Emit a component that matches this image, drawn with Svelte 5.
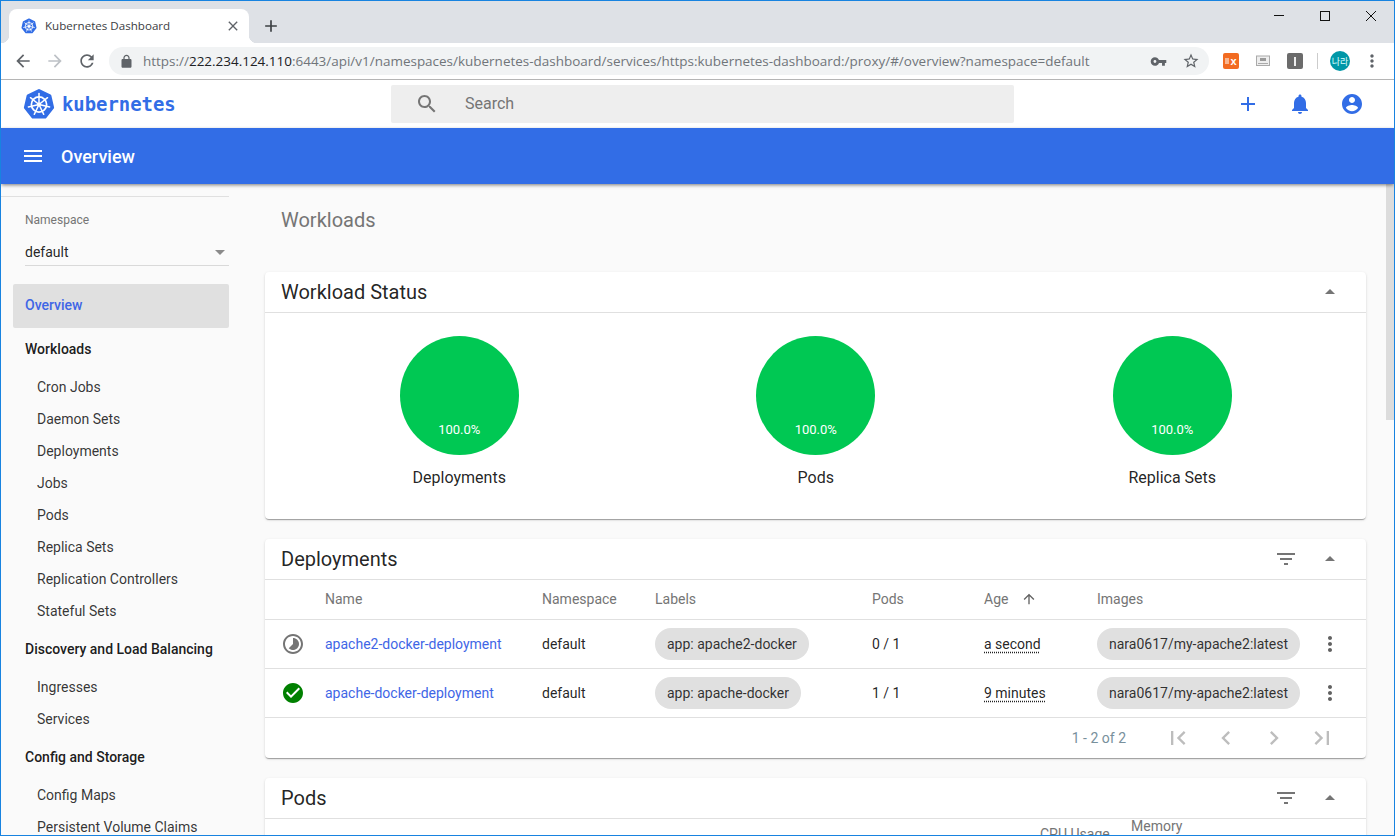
<script>
  const P = {
    back: "M20 11H7.83l5.59-5.59L12 4l-8 8 8 8 1.41-1.41L7.83 13H20v-2z",
    fwd: "M12 4l-1.41 1.41L16.17 11H4v2h12.17l-5.58 5.59L12 20l8-8z",
    reload: "M17.65 6.35C16.2 4.9 14.21 4 12 4c-4.42 0-7.99 3.58-7.99 8s3.57 8 7.99 8c3.73 0 6.84-2.55 7.73-6h-2.08c-.82 2.33-3.04 4-5.65 4-3.31 0-6-2.69-6-6s2.69-6 6-6c1.66 0 3.14.69 4.22 1.78L13 11h7V4l-2.35 2.35z",
    lock: "M18 8h-1V6c0-2.76-2.24-5-5-5S7 3.24 7 6v2H6c-1.1 0-2 .9-2 2v10c0 1.1.9 2 2 2h12c1.1 0 2-.9 2-2V10c0-1.1-.9-2-2-2zM9 6c0-1.66 1.34-3 3-3s3 1.34 3 3v2H9V6z",
    key: "M12.65 10C11.83 7.67 9.61 6 7 6c-3.31 0-6 2.69-6 6s2.69 6 6 6c2.61 0 4.83-1.67 5.65-4H17v4h4v-4h2v-4H12.65zM7 14c-1.1 0-2-.9-2-2s.9-2 2-2 2 .9 2 2-.9 2-2 2z",
    star: "M22 9.24l-7.19-.62L12 2 9.19 8.63 2 9.24l5.46 4.73L5.82 21 12 17.27 18.18 21l-1.63-7.03L22 9.24zM12 15.4l-3.76 2.27 1-4.28-3.32-2.88 4.38-.38L12 6.1l1.71 4.04 4.38.38-3.32 2.88 1 4.28L12 15.4z",
    close: "M19 6.41L17.59 5 12 10.59 6.41 5 5 6.41 10.59 12 5 17.59 6.41 19 12 13.41 17.59 19 19 17.59 13.41 12z",
    plus: "M19 13h-6v6h-2v-6H5v-2h6V5h2v6h6v2z",
    search: "M15.5 14h-.79l-.28-.27C15.41 12.59 16 11.11 16 9.5 16 5.91 13.09 3 9.5 3S3 5.91 3 9.5 5.91 16 9.5 16c1.61 0 3.09-.59 4.23-1.57l.27.28v.79l5 4.99L20.49 19l-4.99-5zm-6 0C7.01 14 5 11.99 5 9.5S7.01 5 9.5 5 14 7.01 14 9.5 11.99 14 9.5 14z",
    bell: "M12 22c1.1 0 2-.9 2-2h-4c0 1.1.89 2 2 2zm6-6v-5c0-3.07-1.64-5.64-4.5-6.32V4c0-.83-.67-1.5-1.5-1.5s-1.5.67-1.5 1.5v.68C7.63 5.36 6 7.92 6 11v5l-2 2v1h16v-1l-2-2z",
    account: "M12 2C6.48 2 2 6.48 2 12s4.48 10 10 10 10-4.48 10-10S17.52 2 12 2zm0 3c1.66 0 3 1.34 3 3s-1.34 3-3 3-3-1.34-3-3 1.34-3 3-3zm0 14.2c-2.5 0-4.71-1.28-6-3.22.03-1.99 4-3.08 6-3.08 1.99 0 5.97 1.09 6 3.08-1.29 1.94-3.5 3.22-6 3.22z",
    menu: "M3 18h18v-2H3v2zm0-5h18v-2H3v2zm0-7v2h18V6H3z",
    filter: "M10 18h4v-2h-4v2zM3 6v2h18V6H3zm3 7h12v-2H6v2z",
    up: "M7 14l5-5 5 5z",
    more: "M12 8c1.1 0 2-.9 2-2s-.9-2-2-2-2 .9-2 2 .9 2 2 2zm0 2c-1.1 0-2 .9-2 2s.9 2 2 2 2-.9 2-2-.9-2-2-2zm0 6c-1.1 0-2 .9-2 2s.9 2 2 2 2-.9 2-2-.9-2-2-2z",
    arrowUp: "M4 12l1.41 1.41L11 7.83V20h2V7.83l5.58 5.59L20 12l-8-8-8 8z",
    check: "M12 2C6.48 2 2 6.48 2 12s4.48 10 10 10 10-4.48 10-10S17.52 2 12 2zm-2 15l-5-5 1.41-1.41L10 14.17l7.59-7.59L19 8l-9 9z",
    lapse: "M16.24 7.76C15.07 6.59 13.54 6 12 6v6l-4.24 4.24c2.34 2.34 6.14 2.34 8.49 0 2.34-2.34 2.34-6.14-.01-8.48zM12 2C6.48 2 2 6.48 2 12s4.48 10 10 10 10-4.48 10-10S17.52 2 12 2zm0 18c-4.42 0-8-3.58-8-8s3.58-8 8-8 8 3.58 8 8-3.58 8-8 8z",
    first: "M18.41 16.59L13.82 12l4.59-4.59L17 6l-6 6 6 6zM6 6h2v12H6z",
    prev: "M15.41 7.41L14 6l-6 6 6 6 1.41-1.41L10.83 12z",
    next: "M10 6L8.59 7.41 13.17 12l-4.58 4.59L10 18l6-6z",
    last: "M5.59 7.41L10.18 12l-4.59 4.59L7 18l6-6-6-6zM16 6h2v12h-2z"
  };
  const groups = [
    ["Workloads", ["Cron Jobs", "Daemon Sets", "Deployments", "Jobs", "Pods", "Replica Sets", "Replication Controllers", "Stateful Sets"]],
    ["Discovery and Load Balancing", ["Ingresses", "Services"]],
    ["Config and Storage", ["Config Maps", "Persistent Volume Claims"]]
  ];
  const charts = ["Deployments", "Pods", "Replica Sets"];
  const rows = [
    { icon: P.lapse, cls: "pending", name: "apache2-docker-deployment", label: "app: apache2-docker", pods: "0 / 1", age: "a second" },
    { icon: P.check, cls: "ok", name: "apache-docker-deployment", label: "app: apache-docker", pods: "1 / 1", age: "9 minutes" }
  ];
  const spokes = [0, 1, 2, 3, 4, 5, 6];
</script>

{#snippet icon(d, size = 24, cls = "")}
  <svg class={cls} width={size} height={size} viewBox="0 0 24 24" fill="currentColor" aria-hidden="true"><path {d} /></svg>
{/snippet}

{#snippet k8s(size)}
  <svg width={size} height={size} viewBox="0 0 32 32" aria-hidden="true">
    <polygon points="16,2.5 26.9,7.8 29.6,19.6 22.1,29 9.9,29 2.4,19.6 5.1,7.8" fill="#326de6" stroke="#326de6" stroke-width="3" stroke-linejoin="round" />
    <circle cx="16" cy="16.5" r="7.6" fill="none" stroke="#fff" stroke-width="1.7" />
    <circle cx="16" cy="16.5" r="2" fill="#fff" />
    {#each spokes as s}
      <line x1="16" y1="16.5" x2="16" y2="5.6" stroke="#fff" stroke-width="1.5" stroke-linecap="round" transform="rotate({s * 51.43} 16 16.5)" />
    {/each}
  </svg>
{/snippet}

<div class="window">
  <div class="tabstrip">
    <div class="tab">
      <span class="fav">{@render k8s(16)}</span>
      <span class="tab-title">Kubernetes Dashboard</span>
      <span class="tab-close">{@render icon(P.close, 16)}</span>
    </div>
    <span class="newtab">{@render icon(P.plus, 20)}</span>
    <div class="winctl">
      <span class="ctl"><i class="min"></i></span>
      <span class="ctl"><i class="max"></i></span>
      <span class="ctl"><svg width="12" height="12" viewBox="0 0 12 12"><path d="M1 1l10 10M11 1L1 11" stroke="#111" stroke-width="1" /></svg></span>
    </div>
  </div>

  <div class="toolbar">
    <span class="tb-btn">{@render icon(P.back, 20)}</span>
    <span class="tb-btn disabled">{@render icon(P.fwd, 20)}</span>
    <span class="tb-btn">{@render icon(P.reload, 20)}</span>
    <div class="omnibox">
      <span class="lock">{@render icon(P.lock, 15)}</span>
      <span class="url">https://<b>222.234.124.110</b>:6443/api/v1/namespaces/kubernetes-dashboard/services/https:kubernetes-dashboard:/proxy/#/overview?namespace=default</span>
      <span class="key">{@render icon(P.key, 17)}</span>
      <span class="star">{@render icon(P.star, 18)}</span>
    </div>
    <div class="exts">
      <span class="ext orange"><i></i>x</span>
      <span class="ext"><svg width="16" height="16" viewBox="0 0 16 16"><rect x="1.5" y="3" width="13" height="9.5" fill="#eee" stroke="#aaa" /><rect x="5" y="5" width="6" height="3" fill="#999" /><rect x="3" y="10" width="10" height="1" fill="#aaa" /></svg></span>
      <span class="ext dark"><i></i></span>
      <span class="sep"></span>
      <span class="avatar">나라</span>
      <span class="tb-dots">{@render icon(P.more, 20)}</span>
    </div>
  </div>

  <header class="apphead">
    <div class="logo">
      {@render k8s(32)}
      <span class="logotext">kubernetes</span>
    </div>
    <div class="search">
      {@render icon(P.search, 24)}
      <span>Search</span>
    </div>
    <div class="actions">
      {@render icon(P.plus, 24)}
      {@render icon(P.bell, 24)}
      {@render icon(P.account, 24)}
    </div>
  </header>

  <div class="bluebar">
    {@render icon(P.menu, 24)}
    <span>Overview</span>
  </div>

  <div class="content">
    <nav class="sidebar">
      <div class="ns">
        <div class="ns-label">Namespace</div>
        <div class="ns-select"><span>default</span><i></i></div>
      </div>
      <div class="nav-active">Overview</div>
      {#each groups as [title, items]}
        <div class="nav-group">{title}</div>
        {#each items as item}
          <div class="nav-item">{item}</div>
        {/each}
      {/each}
    </nav>

    <main class="main">
      <h2 class="page-title">Workloads</h2>

      <section class="card">
        <div class="card-head">
          <h3>Workload Status</h3>
          <span class="head-icons">{@render icon(P.up, 24)}</span>
        </div>
        <div class="charts">
          {#each charts as c}
            <div class="chart">
              <div class="pie">100.0%</div>
              <div class="chart-label">{c}</div>
            </div>
          {/each}
        </div>
      </section>

      <section class="card">
        <div class="card-head">
          <h3>Deployments</h3>
          <span class="head-icons">{@render icon(P.filter, 24)}{@render icon(P.up, 24)}</span>
        </div>
        <div class="row thead">
          <span></span><span>Name</span><span>Namespace</span><span>Labels</span><span>Pods</span>
          <span class="age-h">Age {@render icon(P.arrowUp, 16)}</span>
          <span>Images</span><span></span>
        </div>
        {#each rows as r}
          <div class="row tbody">
            <span class="status {r.cls}">{@render icon(r.icon, 24)}</span>
            <span class="link">{r.name}</span>
            <span>default</span>
            <span><span class="chip">{r.label}</span></span>
            <span>{r.pods}</span>
            <span class="age">{r.age}</span>
            <span><span class="chip">nara0617/my-apache2:latest</span></span>
            <span class="kebab">{@render icon(P.more, 24)}</span>
          </div>
        {/each}
        <div class="pager">
          <span class="range">1 - 2 of 2</span>
          {@render icon(P.first, 28)}
          {@render icon(P.prev, 28)}
          {@render icon(P.next, 28)}
          {@render icon(P.last, 28)}
        </div>
      </section>

      <section class="card">
        <div class="card-head">
          <h3>Pods</h3>
          <span class="head-icons">{@render icon(P.filter, 24)}{@render icon(P.up, 24)}</span>
        </div>
        <div class="pods-head">
          <span class="cpu">CPU Usage</span>
          <span class="mem">Memory<br />Usage</span>
        </div>
      </section>
    </main>

    <div class="scrollbar"><div class="thumb"></div></div>
  </div>
</div>

<style>
  :global(body) { margin: 0; overflow: hidden; background: #fff; }
  svg { display: block; flex: none; }

  .window {
    box-sizing: border-box;
    width: 1395px;
    height: 836px;
    border: 1px solid #1883e0;
    display: flex;
    flex-direction: column;
    overflow: hidden;
    font-family: Roboto, sans-serif;
    font-size: 14px;
    color: rgba(0, 0, 0, 0.87);
    background: #fafafa;
  }

  /* browser chrome */
  .tabstrip {
    flex: none;
    height: 42px;
    background: #dee1e6;
    display: flex;
    align-items: flex-end;
    padding-left: 8px;
  }
  .tab {
    position: relative;
    box-sizing: border-box;
    width: 240px;
    height: 34px;
    background: #fff;
    border-radius: 8px 8px 0 0;
    display: flex;
    align-items: center;
    padding-left: 12px;
    font-family: "Open Sans", "Noto Sans", sans-serif;
    font-size: 11.6px;
    color: #3c4043;
  }
  .tab::before, .tab::after {
    content: "";
    position: absolute;
    bottom: 0;
    width: 8px;
    height: 8px;
  }
  .tab::before { left: -8px; background: radial-gradient(circle at 0 0, transparent 8px, #fff 8.5px); }
  .tab::after { right: -8px; background: radial-gradient(circle at 100% 0, transparent 8px, #fff 8.5px); }
  .fav { margin-right: 8px; }
  .tab-title { flex: 1; white-space: nowrap; margin-top: -2px; }
  .tab-close { color: #5f6368; margin-right: 8px; }
  .newtab { color: #3c4043; margin: 0 0 7px 12px; }
  .winctl { margin-left: auto; align-self: flex-start; display: flex; }
  .ctl { width: 46px; height: 29px; display: flex; align-items: center; justify-content: center; }
  .min { width: 10px; height: 1px; background: #111; }
  .max { box-sizing: border-box; width: 10px; height: 10px; border: 1px solid #111; }

  .toolbar {
    flex: none;
    box-sizing: border-box;
    height: 37px;
    background: #fff;
    border-bottom: 1px solid #b5b5b5;
    display: flex;
    align-items: center;
    padding-left: 6px;
  }
  .tb-btn { width: 32px; display: flex; justify-content: center; color: #5f6368; }
  .tb-btn.disabled { color: #bdc1c6; }
  .omnibox {
    box-sizing: border-box;
    width: 1100px;
    height: 28px;
    margin-left: 6px;
    background: #f1f3f4;
    border-radius: 14px;
    display: flex;
    align-items: center;
    padding: 0 9px 0 10px;
    color: #5f6368;
  }
  .lock { margin-right: 9px; color: #5f6368; }
  .url {
    flex: 1;
    white-space: nowrap;
    overflow: hidden;
    font-family: "Open Sans", "Noto Sans", sans-serif;
    font-size: 13.48px;
    color: #70757a;
  }
  .url b { font-weight: 400; color: #202124; }
  .key { margin-right: 15px; }
  .exts { display: flex; align-items: center; flex: 1; padding-left: 14px; }
  .ext { width: 16px; height: 16px; margin-right: 16px; border-radius: 2px; display: flex; align-items: center; justify-content: center; }
  .orange { background: #f26b21; color: #fff; font: 700 11px "Liberation Sans", sans-serif; }
  .orange i { width: 4px; height: 6px; background: #f9b58f; margin-right: 1px; }
  .dark { background: #6b6b6b; }
  .dark i { width: 2px; height: 9px; background: #eee; }
  .sep { width: 1px; height: 16px; background: #ccc; margin: 0 12px 0 -2px; }
  .avatar {
    width: 20px; height: 20px; border-radius: 50%;
    background: #0097a7; color: #dff;
    font: 9px "Noto Sans CJK KR", sans-serif;
    display: flex; align-items: center; justify-content: center;
  }
  .tb-dots { color: #5f6368; margin-left: 12px; }

  /* app header */
  .apphead {
    flex: none;
    height: 48px;
    background: #fff;
    display: flex;
    align-items: center;
    color: #326de6;
  }
  .logo { width: 390px; display: flex; align-items: center; padding-left: 22px; box-sizing: border-box; gap: 7px; }
  .logotext {
    font-family: "DejaVu Sans Mono", monospace;
    font-weight: 700;
    font-size: 18.9px;
    color: #326de6;
  }
  .search {
    box-sizing: border-box;
    width: 623px;
    height: 38px;
    background: #eee;
    border-radius: 2px;
    display: flex;
    align-items: center;
    gap: 26px;
    padding-left: 24px;
    color: #757575;
    font-size: 16px;
  }
  .search span { margin-top: -2px; }
  .actions { display: flex; gap: 28px; margin-left: 222px; }

  .bluebar {
    position: relative;
    z-index: 2;
    flex: none;
    height: 56px;
    background: #326de6;
    color: #fff;
    display: flex;
    align-items: center;
    gap: 16px;
    padding-left: 20px;
    font-size: 18px;
    font-weight: 500;
    box-shadow: 0 2px 4px -1px rgba(0, 0, 0, 0.3), 0 1px 3px rgba(0, 0, 0, 0.25);
  }

  .content { flex: 1; min-height: 0; display: flex; }

  /* sidebar */
  .sidebar { flex: none; width: 228px; padding-top: 12px; box-sizing: border-box; }
  .ns {
    border-top: 1px solid #e0e0e0;
    padding-left: 24px;
    height: 88px;
    box-sizing: border-box;
  }
  .ns-label { font-size: 12px; color: #757575; margin-top: 16px; line-height: 14px; }
  .ns-select {
    display: flex;
    align-items: center;
    justify-content: space-between;
    height: 26px;
    margin-top: 12px;
    padding-right: 4px;
    border-bottom: 1px solid #d9d9d9;
    color: rgba(0, 0, 0, 0.87);
  }
  .ns-select i { width: 0; height: 0; border: 5px solid transparent; border-top-color: #8a8a8a; border-bottom: 0; }
  .nav-active {
    margin: 0 0 -1px 12px;
    height: 44px;
    line-height: 42px;
    padding-left: 12px;
    background: #e0e0e0;
    border-radius: 2px;
    color: #3f66e6;
    font-weight: 500;
  }
  .nav-group { height: 44px; line-height: 44px; padding-left: 24px; font-weight: 500; color: rgba(0,0,0,.9); white-space: nowrap; }
  .nav-item { height: 32px; line-height: 32px; padding-left: 36px; color: rgba(0,0,0,.8); white-space: nowrap; }

  /* main */
  .main { flex: 1; min-width: 0; padding: 0 20px 0 36px; overflow: hidden; }
  .page-title {
    margin: 0;
    height: 88px;
    padding: 23px 0 0 16px;
    box-sizing: border-box;
    font-size: 20px;
    font-weight: 400;
    line-height: 26px;
    color: #757575;
  }
  .card {
    background: #fff;
    border-radius: 4px;
    margin-bottom: 20px;
    box-shadow: 0 2px 1px -1px rgba(0,0,0,.2), 0 1px 1px 0 rgba(0,0,0,.14), 0 1px 3px 0 rgba(0,0,0,.12);
    overflow: hidden;
  }
  .card-head {
    box-sizing: border-box;
    height: 41px;
    border-bottom: 1px solid #e0e0e0;
    display: flex;
    align-items: center;
    justify-content: space-between;
    padding: 0 24px 0 16px;
  }
  .card-head h3 { margin: 0; font-size: 20px; font-weight: 400; color: rgba(0,0,0,.87); }
  .head-icons { display: flex; gap: 20px; color: #757575; margin-top: -1px; }

  .charts { display: grid; grid-template-columns: repeat(3, 1fr); padding: 23px 15.5px 0 16px; height: 183px; }
  .chart { display: flex; flex-direction: column; align-items: center; }
  .pie {
    box-sizing: border-box;
    width: 119px;
    height: 119px;
    border-radius: 50%;
    background: #00c853;
    color: #fff;
    font-size: 13px;
    text-align: center;
    padding-top: 85px;
    line-height: 18px;
  }
  .chart-label { margin-top: 13px; font-size: 16px; line-height: 20px; }

  .row {
    box-sizing: border-box;
    display: grid;
    grid-template-columns: 44px 217px 113px 217px 112px 113px 1fr 36px;
    padding: 0 18px 0 16px;
    align-items: center;
    border-bottom: 1px solid #e0e0e0;
    white-space: nowrap;
  }
  .thead { height: 40px; padding-bottom: 2px; color: #757575; font-size: 14px; }
  .age-h { display: flex; align-items: center; gap: 13px; }
  .age-h svg { color: #616161; }
  .tbody { height: 49px; }
  .status { display: block; }
  .pending { color: #757575; }
  .ok { color: #008000; }
  .link { color: #3f66e6; }
  .chip {
    display: inline-block;
    height: 32px;
    line-height: 32px;
    padding: 0 12px;
    border-radius: 16px;
    background: #e0e0e0;
    color: rgba(0,0,0,.8);
    vertical-align: middle;
  }
  .age { text-decoration: underline dotted; text-underline-offset: 3px; }
  .kebab { color: #616161; display: block; padding-left: 6px; }

  .pager {
    height: 40px;
    display: flex;
    align-items: center;
    justify-content: flex-end;
    padding-right: 30px;
    gap: 20px;
    color: #bdbdbd;
  }
  .range { color: #78909c; margin-right: 18px; }

  .pods-head {
    display: flex;
    padding-left: 775px;
    height: 60px;
    align-items: flex-start;
    color: #757575;
    line-height: 16px;
    white-space: nowrap;
  }
  .pods-head .cpu { width: 91px; margin-top: 7px; }
  .pods-head .mem { margin-top: -1px; }

  .scrollbar { flex: none; width: 8px; background: #fafafa; }
  .thumb { height: 236px; background: #dcdcdc; }
</style>
